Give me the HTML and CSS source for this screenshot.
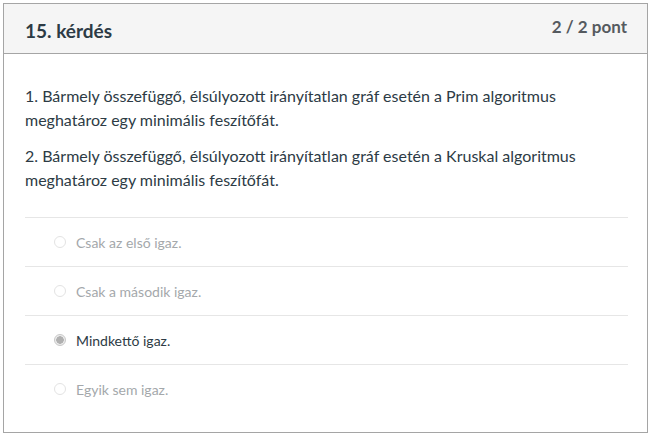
FILE: index.html
```html
<!DOCTYPE html>
<html lang="hu">
<head>
<meta charset="utf-8">
<link rel="stylesheet" href="styles.css">
</head>
<body>
<div class="card">
  <div class="card-header">
    <h2 class="title">15. kérdés</h2>
    <span class="points">2 / 2 pont</span>
  </div>
  <div class="card-body">
    <div class="question">
      <p>1. Bármely összefüggő, élsúlyozott irányítatlan gráf esetén a Prim algoritmus meghatároz egy minimális feszítőfát.</p>
      <p>2. Bármely összefüggő, élsúlyozott irányítatlan gráf esetén a Kruskal algoritmus meghatároz egy minimális feszítőfát.</p>
    </div>
    <div class="answers">
      <div class="answer"><span class="radio"></span><span class="label">Csak az első igaz.</span></div>
      <div class="answer"><span class="radio"></span><span class="label">Csak a második igaz.</span></div>
      <div class="answer selected"><span class="radio"></span><span class="label">Mindkettő igaz.</span></div>
      <div class="answer"><span class="radio"></span><span class="label">Egyik sem igaz.</span></div>
    </div>
  </div>
</div>
</body>
</html>
```
FILE: styles.css
```css
* { box-sizing: border-box; }
html, body { background: #fff; }
body {
  margin: 3px 3px 0 3px;
  font-family: Lato, "Liberation Sans", sans-serif;
  color: #2d3b45;
}
.card {
  border: 1px solid #a5a5a5;
  height: 430px;
  background: #fff;
}
.card-header {
  display: flex;
  justify-content: space-between;
  align-items: flex-start;
  height: 50px;
  background: #f5f5f5;
  border-bottom: 1px solid #a5a5a5;
  padding: 0 20px 0 21px;
}
.title {
  margin: 0;
  padding-top: 14px;
  font-size: 19px;
  line-height: 26px;
  font-weight: 700;
  color: #2d3b45;
}
.points {
  padding-top: 12px;
  font-size: 17px;
  line-height: 22px;
  font-weight: 700;
  color: #555a5f;
}
.card-body {
  padding: 30px 19px 0 21px;
}
.question p {
  margin: 0 0 12px 0;
  font-size: 16px;
  line-height: 24px;
}
.answers {
  margin-top: 25px;
}
.answer {
  display: flex;
  align-items: center;
  height: 49px;
  border-top: 1px solid #e6e6e6;
  padding-left: 29px;
  font-size: 14px;
  color: #a4a8ab;
}
.radio {
  width: 12px;
  height: 12px;
  border-radius: 50%;
  border: 1px solid #e3e3e3;
  background: #fff;
  margin-right: 10px;
  flex: none;
}
.answer.selected { color: #2d3b45; }
.answer.selected .radio {
  border: 1px solid #c8c8c8;
  background: radial-gradient(circle, #b0b0b0 0, #b0b0b0 3.5px, #ececec 4px);
}
```
